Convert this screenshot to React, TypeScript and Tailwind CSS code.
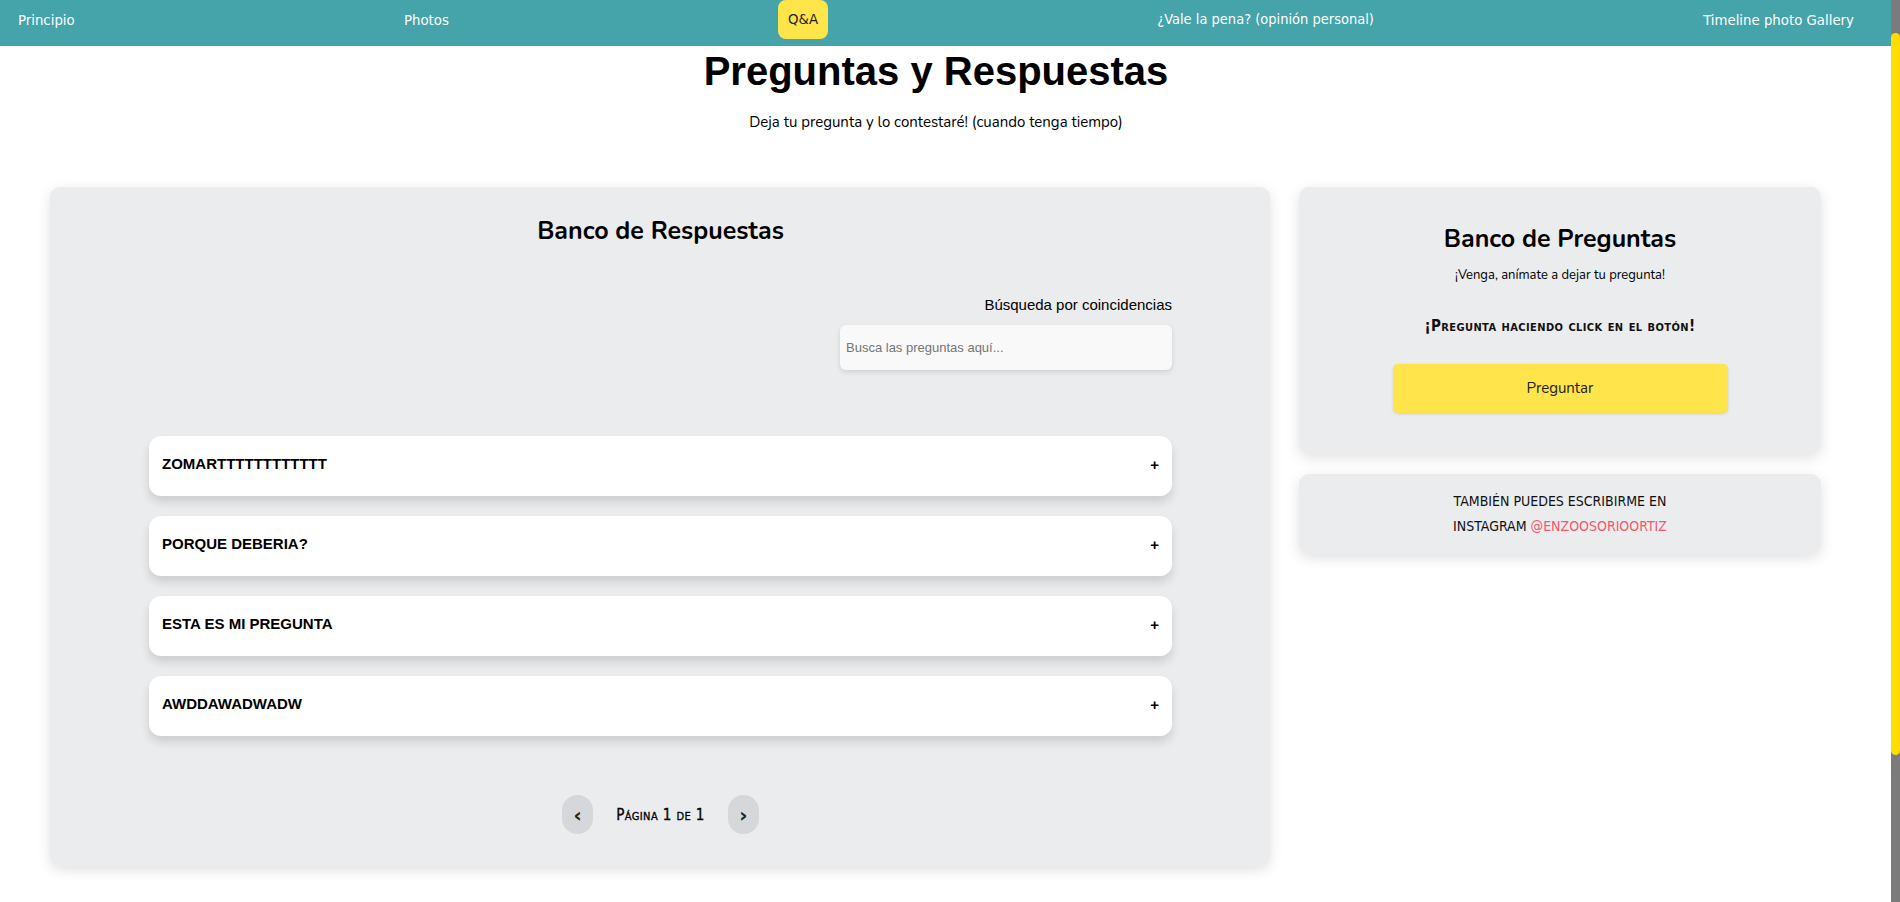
import React from "react";

const nunito = { fontFamily: '"Nunito", "Lato", "Noto Sans", sans-serif' };

function AccordionItem({ title }: { title: string }) {
  return (
    <div className="flex h-[60px] w-full items-start justify-between rounded-[12px] bg-white px-[13px] pt-[19px] shadow-[0_6px_10px_rgba(0,0,0,0.13)]">
      <span className="text-[15px] font-bold uppercase leading-[18px] text-black [font-family:'Liberation_Sans',Arial,sans-serif]">
        {title}
      </span>
      <span className="pt-[1px] text-[15px] font-bold leading-[18px] text-black [font-family:'Liberation_Sans',Arial,sans-serif]">
        +
      </span>
    </div>
  );
}

export default function App() {
  const navFont = "[font-family:'Liberation_Sans_Narrow','DejaVu_Sans_Condensed','Roboto',sans-serif]";
  return (
    <div className="flex h-[902px] w-full overflow-hidden bg-white">
      <div className="flex min-w-0 flex-1 flex-col">
        <nav className="flex h-[46px] w-full items-start justify-between bg-[#45a3aa] pl-[18px] pr-[37px]">
          <a className={`flex h-[40px] items-center text-[14.8px] text-white ${navFont}`}>Principio</a>
          <a className={`flex h-[40px] items-center text-[14.8px] text-white ${navFont}`}>Photos</a>
          <a className={`flex h-[39px] items-center rounded-[8px] bg-[#ffe44a] px-[10px] text-[14.8px] text-[#222] ${navFont}`}>Q&amp;A</a>
          <a className={`flex h-[40px] items-center text-[14.5px] text-white ${navFont}`}>¿Vale la pena? (opinión personal)</a>
          <a className={`flex h-[40px] items-center text-[14.8px] text-white ${navFont}`}>Timeline photo Gallery</a>
        </nav>

        <main className="flex flex-col">
          <div className="flex flex-col pr-[19px]">
            <h1 className="mt-[5px] text-center text-[40px] font-bold leading-[40px] text-black [font-family:'Liberation_Sans',Arial,sans-serif]">
              Preguntas y Respuestas
            </h1>
            <p className="mt-[21px] text-center text-[15px] leading-[20px] text-black" style={nunito}>
              Deja tu pregunta y lo contestaré! (cuando tenga tiempo)
            </p>
          </div>

          <div className="mt-[55px] flex items-start gap-[29px] pl-[50px]">
            {/* Left card */}
            <section className="flex h-[679px] w-[1220px] flex-col rounded-[10px] bg-[#ebecee] pl-[99px] pr-[98px] pt-[28px] shadow-[0_4px_14px_rgba(0,0,0,0.12)]">
              <h2 className="text-center text-[25px] font-bold leading-[32px] text-black" style={nunito}>
                Banco de Respuestas
              </h2>
              <div className="mt-[48px] flex flex-col items-end">
                <label className="text-[15px] leading-[20px] text-black [font-family:'Liberation_Sans',Arial,sans-serif]">
                  Búsqueda por coincidencias
                </label>
                <input
                  className="mt-[10px] h-[45px] w-[332px] rounded-[6px] bg-[#f9f9f9] px-[6px] text-[13px] text-black shadow-[0_2px_5px_rgba(0,0,0,0.12)] outline-none placeholder:text-[#757575] [font-family:'Liberation_Sans',Arial,sans-serif]"
                  placeholder="Busca las preguntas aquí..."
                />
              </div>
              <div className="mt-[66px] flex flex-col gap-[20px]">
                <AccordionItem title="ZOMARTTTTTTTTTTTT" />
                <AccordionItem title="PORQUE DEBERIA?" />
                <AccordionItem title="ESTA ES MI PREGUNTA" />
                <AccordionItem title="AWDDAWADWADW" />
              </div>
              <div className="mt-[59px] flex items-center justify-center gap-[23px]">
                <button className="flex h-[39px] w-[31px] items-center justify-center rounded-full bg-[#d5d7db] text-[20px] font-bold leading-none text-[#222] [font-family:'DejaVu_Sans',sans-serif]">
                  ‹
                </button>
                <span className="text-[15px] leading-[20px] tracking-[0.4px] text-[#000] [font-variant:small-caps] [font-family:'Liberation_Sans_Narrow','DejaVu_Sans_Condensed',sans-serif] [-webkit-text-stroke:0.3px_#000]">
                  Página 1 de 1
                </span>
                <button className="flex h-[39px] w-[31px] items-center justify-center rounded-full bg-[#d5d7db] text-[20px] font-bold leading-none text-[#222] [font-family:'DejaVu_Sans',sans-serif]">
                  ›
                </button>
              </div>
            </section>

            {/* Right column */}
            <aside className="flex w-[522px] flex-col gap-[20px]">
              <div className="flex h-[267px] flex-col items-center rounded-[10px] bg-[#ebecee] pt-[36px] shadow-[0_4px_14px_rgba(0,0,0,0.12)]">
                <h2 className="text-center text-[25px] font-bold leading-[32px] text-black" style={nunito}>
                  Banco de Preguntas
                </h2>
                <p className="mt-[11px] text-center text-[13px] leading-[18px] text-black" style={nunito}>
                  ¡Venga, anímate a dejar tu pregunta!
                </p>
                <p className="mt-[32px] text-center text-[15px] font-bold leading-[20px] tracking-[0.4px] text-[#111] [font-variant:small-caps] [font-family:'Liberation_Sans_Narrow','DejaVu_Sans_Condensed',sans-serif]">
                  ¡Pregunta haciendo click en el botón!
                </p>
                <button
                  className="mt-[28px] h-[49px] w-[335px] rounded-[5px] bg-[#ffe44c] text-[15px] text-[#222] shadow-[0_1px_3px_rgba(0,0,0,0.12)]"
                  style={nunito}
                >
                  Preguntar
                </button>
              </div>
              <div className="flex h-[80px] flex-col items-center justify-center rounded-[10px] bg-[#ebecee] shadow-[0_4px_14px_rgba(0,0,0,0.12)]">
                <p className="text-center text-[14px] uppercase leading-[25px] text-[#111] [font-family:'Liberation_Sans_Narrow','DejaVu_Sans_Condensed',sans-serif]">
                  También puedes escribirme en
                  <br />
                  Instagram <span className="text-[#f05a6a]">@enzoosorioortiz</span>
                </p>
              </div>
            </aside>
          </div>
        </main>
      </div>

      {/* scrollbar */}
      <div className="flex h-full w-[9px] shrink-0 flex-col bg-[#7b7b7b] pt-[33px]">
        <div className="h-[722px] w-full rounded-full bg-[#ffdd00]" />
      </div>
    </div>
  );
}
